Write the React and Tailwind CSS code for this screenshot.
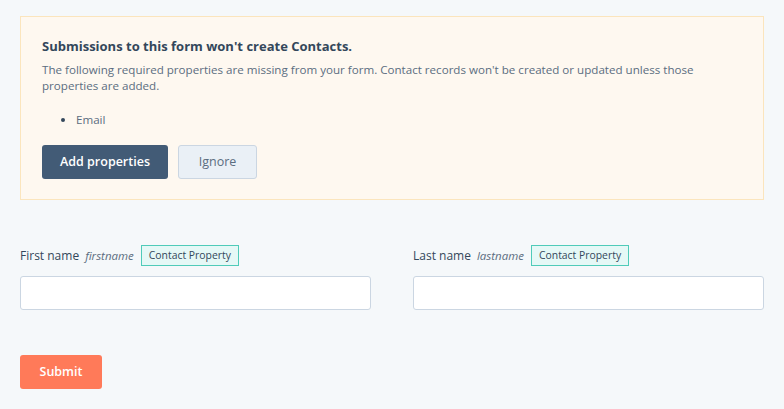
export default function App() {
  return (
    <div className="min-h-[409px] bg-[#f5f8fa] px-5 pt-4 text-[#33475b]" style={{ fontFamily: '"Open Sans", Lato, sans-serif' }}>
      <div className="border border-[#fbe5bd] bg-[#fef8f0] px-[21px] pt-[21px] pb-[20px]">
        <h3 className="text-[13px] font-bold leading-4 text-[#33475b]">Submissions to this form won't create Contacts.</h3>
        <p className="mt-[8px] text-[11.6px] leading-4 text-[#5b6d80]">
          The following required properties are missing from your form. Contact records won't be created or updated unless those properties are added.
        </p>
        <ul className="mt-[18px] list-disc pl-[34px] text-[11.6px] leading-4 text-[#5b6d80] marker:text-[#33475b]">
          <li>Email</li>
        </ul>
        <div className="mt-[17px] flex gap-[10px]">
          <button className="h-[34px] w-[126px] rounded-[3px] bg-[#425b76] text-[12.5px] font-semibold text-white">Add properties</button>
          <button className="h-[34px] w-[79px] rounded-[3px] border border-[#cbd6e2] bg-[#eaf0f6] text-[12.5px] text-[#5b6d80]">Ignore</button>
        </div>
      </div>

      <div className="mt-[45px] grid grid-cols-2 gap-[42px]">
        {[
          ['First name', 'firstname'],
          ['Last name', 'lastname'],
        ].map(([label, name]) => (
          <div key={name}>
            <div className="flex h-[21px] items-center">
              <span className="text-[12px] text-[#33475b]">{label}</span>
              <span className="ml-[6px] text-[11.5px] italic text-[#5b6d80]">{name}</span>
              <span className="ml-[7px] flex h-[21px] items-center border border-[#4fcbb9] bg-[#e5f8f6] px-[7px] text-[10.4px] font-medium text-[#33475b]">Contact Property</span>
            </div>
            <input className="mt-[10px] block h-[34px] w-full rounded-[3px] border border-[#cbd6e2] bg-white" />
          </div>
        ))}
      </div>

      <button className="mt-[45px] h-[34px] w-[82px] rounded-[3px] bg-[#ff7a59] text-[12.5px] font-semibold text-white">Submit</button>
    </div>
  );
}
